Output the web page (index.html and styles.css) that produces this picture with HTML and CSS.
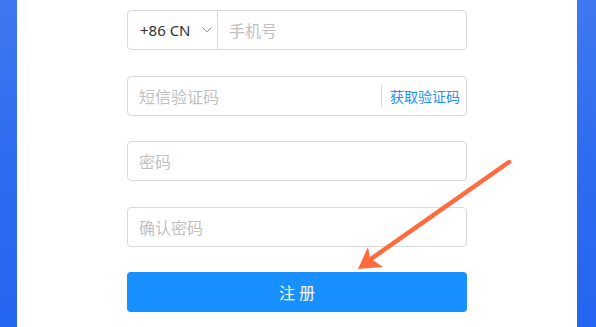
FILE: index.html
```html
<!DOCTYPE html>
<html lang="zh">
<head>
<meta charset="utf-8">
<link rel="stylesheet" href="styles.css">
</head>
<body>
<div class="page">
  <div class="card">
    <form class="form">
      <div class="field">
        <div class="country">
          <span class="code">+86 CN</span>
          <svg class="chev" width="10" height="6" viewBox="0 0 10 6"><path d="M0.5 0.5 L5 5 L9.5 0.5" fill="none" stroke="#999" stroke-width="1"/></svg>
        </div>
        <span class="ph">手机号</span>
      </div>
      <div class="field">
        <span class="ph grow">短信验证码</span>
        <span class="link">获取验证码</span>
      </div>
      <div class="field"><span class="ph">密码</span></div>
      <div class="field"><span class="ph">确认密码</span></div>
      <div class="btn">注册</div>
    </form>
    <svg class="arrow" width="596" height="327" viewBox="0 0 596 327">
      <line x1="509" y1="162" x2="368" y2="261" stroke="#ff6b3d" stroke-width="4.5" stroke-linecap="round"/>
      <path d="M358 269 L368 247 L370 258 L383 267 Z" fill="#ff6b3d"/>
    </svg>
  </div>
</div>
</body>
</html>
```
FILE: styles.css
```css
html, body {
  margin: 0;
  padding: 0;
}
body {
  width: 596px;
  height: 327px;
  overflow: hidden;
  background: linear-gradient(180deg, #3f78f1 0%, #2e6cf0 50%, #2566f0 100%);
  font-family: "Noto Sans CJK SC", "Noto Sans", sans-serif;
}
.page {
  height: 327px;
  padding: 0 19px 0 17px;
}
.card {
  position: relative;
  background: #fff;
  height: 327px;
}
.form {
  margin: 0;
  padding: 10px 0 0 110px;
  width: 340px;
}
.field {
  box-sizing: border-box;
  height: 40px;
  border: 1px solid #d9d9d9;
  border-radius: 4px;
  display: flex;
  align-items: center;
  margin-bottom: 25.5px;
  background: #fff;
}
.country {
  width: 90px;
  height: 100%;
  box-sizing: border-box;
  border-right: 1px solid #d9d9d9;
  display: flex;
  align-items: center;
  padding-left: 12px;
  gap: 11px;
}
.code {
  font-family: "Noto Sans", "Open Sans", sans-serif;
  font-size: 15px;
  color: #333;
}
.chev {
  display: block;
}
.ph {
  font-size: 16px;
  color: #bfbfbf;
  padding-left: 11px;
}
.grow {
  flex: 1;
}
.link {
  font-size: 14px;
  color: #1890ff;
  border-left: 1px solid #d9d9d9;
  height: 22px;
  line-height: 22px;
  padding: 0 6px 0 8px;
}
.btn {
  height: 40px;
  border-radius: 4px;
  background: #1890ff;
  color: #fff;
  font-size: 16px;
  letter-spacing: 4px;
  text-indent: 4px;
  display: flex;
  align-items: center;
  justify-content: center;
}
.arrow {
  position: absolute;
  left: -17px;
  top: 0;
  pointer-events: none;
}
```
